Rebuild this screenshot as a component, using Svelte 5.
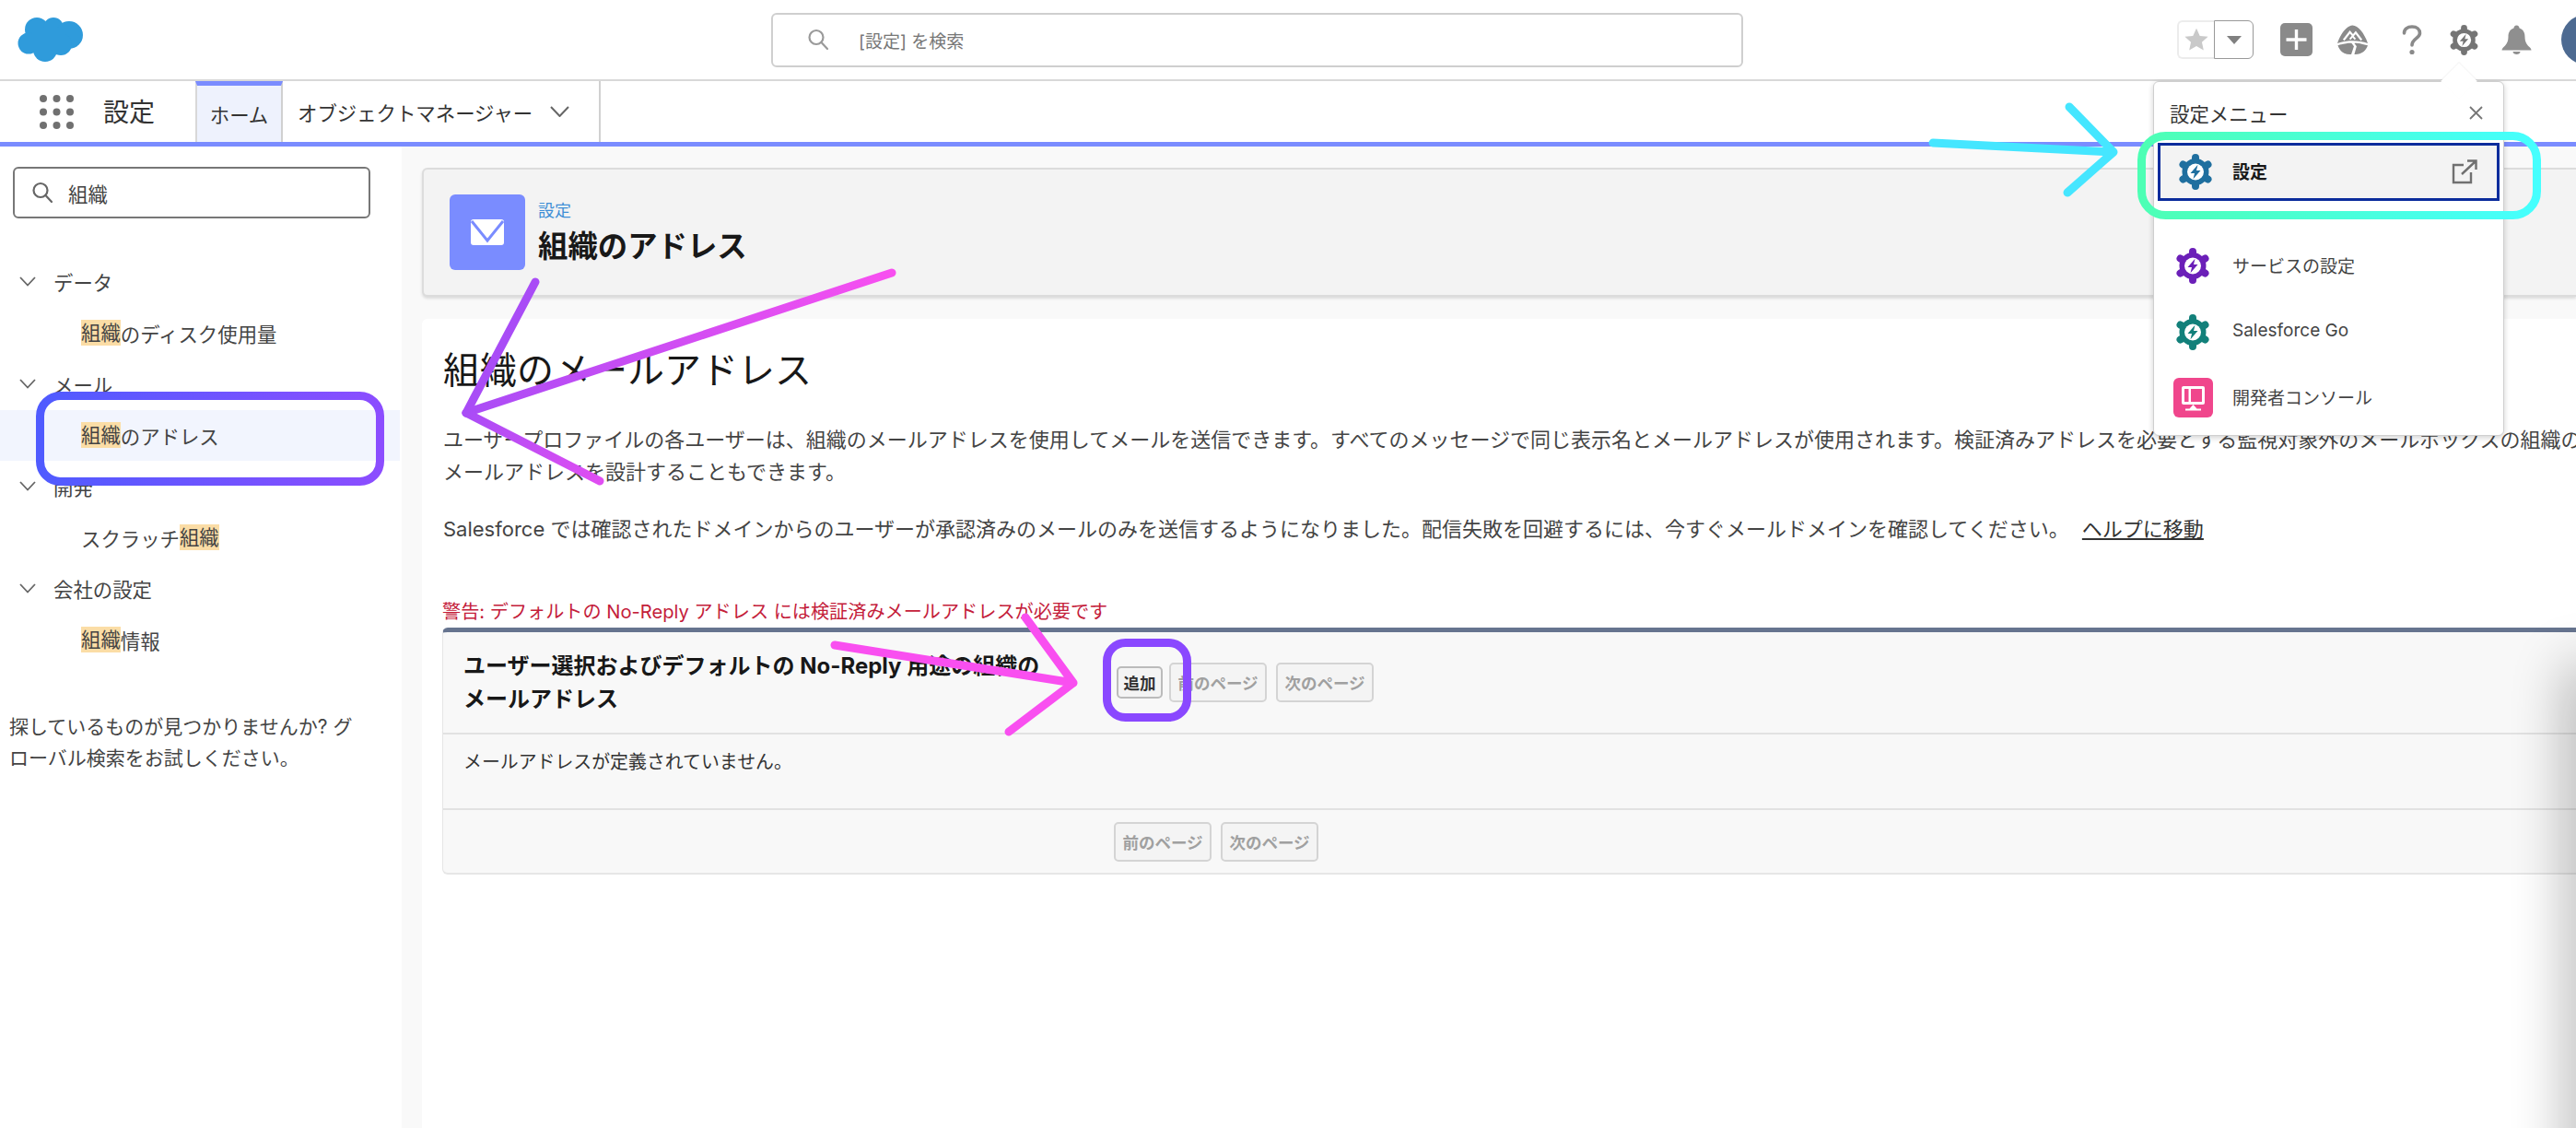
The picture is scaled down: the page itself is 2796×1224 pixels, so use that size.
<script lang="ts">
  interface Part { t: string; hl?: boolean; }
  interface Group { title: string; items: { parts: Part[]; active?: boolean }[]; }

  const groups: Group[] = [
    { title: 'データ', items: [{ parts: [{ t: '組織', hl: true }, { t: 'のディスク使用量' }] }] },
    { title: 'メール', items: [{ parts: [{ t: '組織', hl: true }, { t: 'のアドレス' }], active: true }] },
    { title: '開発', items: [{ parts: [{ t: 'スクラッチ' }, { t: '組織', hl: true }] }] },
    { title: '会社の設定', items: [{ parts: [{ t: '組織', hl: true }, { t: '情報' }] }] }
  ];

  const knobs = [[18, 4], [31.5, 11.5], [31.5, 27.5], [18, 35], [4.5, 27.5], [4.5, 11.5]];
</script>

{#snippet gear(color: string)}
  <svg class="gear" viewBox="0 0 36 39">
    <circle cx="18" cy="19.5" r="14.5" fill={color} />
    {#each knobs as k}
      <line x1="18" y1="19.5" x2={k[0]} y2={k[1]} stroke={color} stroke-width="8" stroke-linecap="round" />
    {/each}
    <circle cx="18" cy="19.5" r="9" fill="#fff" />
    <path d="M20.5 11.8 L12.5 21 H17 L15.5 27.2 L23.5 18 H19 Z" fill={color} />
  </svg>
{/snippet}

<div class="page">
  <header class="top">
    <div class="logo-cell">
      <svg class="logo" viewBox="0 0 72 50">
        <g fill="#2f9bdb">
          <circle cx="21" cy="14" r="13" />
          <circle cx="39" cy="12" r="11" />
          <circle cx="56" cy="20" r="15" />
          <circle cx="12" cy="29" r="11.5" />
          <circle cx="30" cy="36" r="13" />
          <circle cx="47" cy="30" r="12" />
          <rect x="16" y="12" width="36" height="24" />
        </g>
      </svg>
    </div>
    <div class="search">
      <svg class="mag" viewBox="0 0 24 24" fill="none" stroke="#9a9a9a" stroke-width="2.2">
        <circle cx="10" cy="9.5" r="7.5" />
        <path d="M15.5 15 L22 22" stroke-linecap="round" />
      </svg>
      <span>[設定] を検索</span>
    </div>
    <div class="actions">
      <div class="fav">
        <span class="fav-star">
          <svg viewBox="0 0 24 24" width="28" height="28"><path d="M12 1.5l3.2 7 7.6.8-5.7 5.1 1.6 7.5L12 18.1l-6.7 3.8 1.6-7.5L1.2 9.3l7.6-.8z" fill="#c9c9c9" /></svg>
        </span>
        <span class="fav-drop"><i class="tri"></i></span>
      </div>
      <svg class="plus" viewBox="0 0 35 36">
        <rect width="35" height="36" rx="5" fill="#8a8a8a" />
        <path d="M17.5 7v22M6.5 18h22" stroke="#fff" stroke-width="3.4" />
      </svg>
      <svg class="trail" viewBox="0 0 36 34">
        <path d="M18 0.5C24 0.5 31 9 35 20.5C25 17 11 17 1 20.5C5 9 12 0.5 18 0.5Z" fill="#8a8a8a" />
        <path d="M1.5 23C11 20 16 20 17 20.5L19.5 24L16.5 33C8 33.5 3.5 29 1.5 23ZM35 23C25 20 21 20 20 20.5L22.5 24L20 33C28 33.5 33 29 35 23Z" fill="#8a8a8a" />
        <path d="M8 17L15 8L18.5 12L21.5 8.5L28 17" fill="none" stroke="#fff" stroke-width="2.2" />
        <path d="M15 16L18 12.5L21 16" fill="none" stroke="#fff" stroke-width="2" />
      </svg>
      <svg class="help" viewBox="0 0 22 33" fill="none">
        <path d="M2.5 9C2.5 4.5 6 2 11 2C16.5 2 19.5 5 19.5 9C19.5 14.5 11 15 11 22" stroke="#8a8a8a" stroke-width="3.6" stroke-linecap="round" />
        <circle cx="11" cy="29.5" r="2.6" fill="#8a8a8a" />
      </svg>
      <span class="gear-top">{@render gear('#757575')}</span>
      <svg class="bell" viewBox="0 0 33 32">
        <path d="M16.5 0.5C18.5 0.5 19.5 2 19.5 3.5C24 5 25.5 8.5 25.5 13C25.5 19 28 22 31 24.5C32 25.5 32.5 26.5 32.5 27.5H0.5C0.5 26.5 1 25.5 2 24.5C5 22 7.5 19 7.5 13C7.5 8.5 9 5 13.5 3.5C13.5 2 14.5 0.5 16.5 0.5Z" fill="#8f8f8f" />
        <path d="M12.5 29H20.5C20.5 31 18.5 32 16.5 32C14.5 32 12.5 31 12.5 29Z" fill="#8f8f8f" />
      </svg>
      <span class="avatar"></span>
    </div>
  </header>

  <nav class="tabs">
    <div class="app">
      <svg class="dots" viewBox="0 0 37 37">
        {#each [4, 18.5, 33] as cy}
          {#each [4, 18.5, 33] as cx}
            <circle {cx} {cy} r="4" fill="#707070" />
          {/each}
        {/each}
      </svg>
      <span class="app-name">設定</span>
    </div>
    <div class="tab home">ホーム</div>
    <div class="tab obj">
      <span>オブジェクトマネージャー</span>
      <svg viewBox="0 0 21 12" width="21" height="12" fill="none"><path d="M1 1l9.5 10L20 1" stroke="#666" stroke-width="2" /></svg>
    </div>
  </nav>

  <div class="body">
    <aside class="side">
      <div class="find">
        <svg class="mag" viewBox="0 0 24 24" fill="none" stroke="#666" stroke-width="2.2">
          <circle cx="10" cy="9.5" r="7.5" />
          <path d="M15.5 15 L22 22" stroke-linecap="round" />
        </svg>
        <span>組織</span>
      </div>
      <ul class="tree">
        {#each groups as g}
          <li class="group">
            <svg viewBox="0 0 18 11" width="18" height="11" fill="none"><path d="M1 1l8 8.5L17 1" stroke="#666" stroke-width="1.8" /></svg>
            <span>{g.title}</span>
          </li>
          {#each g.items as item}
            <li class="leaf" class:active={item.active}>
              {#each item.parts as p}
                {#if p.hl}<mark>{p.t}</mark>{:else}{p.t}{/if}
              {/each}
            </li>
          {/each}
        {/each}
      </ul>
      <p class="hint">探しているものが見つかりませんか? グローバル検索をお試しください。</p>
    </aside>

    <main class="content">
      <section class="card">
        <div class="card-icon">
          <svg viewBox="0 0 36 28" width="36" height="28">
            <rect width="36" height="28" rx="3" fill="#fff" />
            <path d="M1 2l17 21L35 2" fill="none" stroke="#7a8cff" stroke-width="3" />
          </svg>
        </div>
        <div class="card-text">
          <div class="crumb">設定</div>
          <h2>組織のアドレス</h2>
        </div>
      </section>

      <section class="panel">
        <h1>組織のメールアドレス</h1>
        <p class="first">ユーザープロファイルの各ユーザーは、組織のメールアドレスを使用してメールを送信できます。すべてのメッセージで同じ表示名とメールアドレスが使用されます。検証済みアドレスを必要とする監視対象外のメールボックスの組織の<br />メールアドレスを設計することもできます。</p>
        <p class="second">Salesforce では確認されたドメインからのユーザーが承認済みのメールのみを送信するようになりました。配信失敗を回避するには、今すぐメールドメインを確認してください。 <a href="#help">ヘルプに移動</a></p>
        <div class="warn">警告: デフォルトの No-Reply アドレス には検証済みメールアドレスが必要です</div>

        <div class="table">
          <div class="t-head">
            <h3>ユーザー選択およびデフォルトの No-Reply 用途の組織の<br />メールアドレス</h3>
            <button class="add">追加</button>
            <button class="off">前のページ</button>
            <button class="off">次のページ</button>
          </div>
          <div class="t-body">メールアドレスが定義されていません。</div>
          <div class="t-foot">
            <button class="off">前のページ</button>
            <button class="off">次のページ</button>
          </div>
        </div>
      </section>
    </main>
  </div>

  <div class="edge-shadow"></div>

  <div class="menu">
    <i class="notch"></i>
    <div class="menu-head">
      <span>設定メニュー</span>
      <svg viewBox="0 0 15 15" width="15" height="15"><path d="M1 1l13 13M14 1L1 14" stroke="#777" stroke-width="1.8" /></svg>
    </div>
    <div class="menu-row selected">
      <span class="menu-icon">{@render gear('#1f6f9f')}</span>
      <b>設定</b>
      <svg class="ext" viewBox="0 0 28 27" fill="none" stroke="#707070" stroke-width="2.4">
        <path d="M13 6H2v19h19V14" />
        <path d="M11 16L26 2M17 1.5h9.5V11" />
      </svg>
    </div>
    <div class="menu-list">
      <div class="menu-row"><span class="menu-icon">{@render gear('#6b1fb8')}</span><span>サービスの設定</span></div>
      <div class="menu-row"><span class="menu-icon">{@render gear('#12807a')}</span><span>Salesforce Go</span></div>
      <div class="menu-row">
        <span class="menu-icon">
          <svg viewBox="0 0 43 43" width="43" height="43">
            <rect width="43" height="43" rx="6" fill="#f0468c" />
            <rect x="9" y="9" width="25" height="20" rx="2" fill="#fff" />
            <rect x="12" y="12" width="4.5" height="14" fill="#f0468c" />
            <rect x="19" y="12" width="12" height="14" fill="#f0468c" />
            <path d="M21.5 29l4 4.5h-8zM13 33.5h17v2H13z" fill="#fff" />
          </svg>
        </span>
        <span>開発者コンソール</span>
      </div>
    </div>
  </div>

  <!-- annotations drawn over the screenshot -->
  <svg class="marks" viewBox="0 0 2796 1224" fill="none" stroke-linecap="round" stroke-linejoin="round">
    <defs>
      <linearGradient id="mint" gradientUnits="userSpaceOnUse" x1="2320" y1="0" x2="2758" y2="0">
        <stop offset="0" stop-color="#4dffb4" />
        <stop offset="1" stop-color="#45ffff" />
      </linearGradient>
      <linearGradient id="violet" gradientUnits="userSpaceOnUse" x1="39" y1="0" x2="417" y2="0">
        <stop offset="0" stop-color="#4f5bff" />
        <stop offset="1" stop-color="#8c4dff" />
      </linearGradient>
      <linearGradient id="magenta" gradientUnits="userSpaceOnUse" x1="968" y1="296" x2="506" y2="448">
        <stop offset="0" stop-color="#f84ff0" />
        <stop offset="1" stop-color="#a94cf6" />
      </linearGradient>
      <linearGradient id="magenta2" gradientUnits="userSpaceOnUse" x1="506" y1="448" x2="651" y2="522">
        <stop offset="0" stop-color="#a94cf6" />
        <stop offset="1" stop-color="#e04ef2" />
      </linearGradient>
    </defs>
    <path d="M2098 155 L2294 165 M2246 116 L2294 165 L2244 209" stroke="#45e6ff" stroke-width="9" />
    <rect x="2324.5" y="147.5" width="429" height="86" rx="26" stroke="url(#mint)" stroke-width="9" />
    <rect x="43.5" y="429.5" width="369" height="93" rx="22" stroke="url(#violet)" stroke-width="9" />
    <path d="M581 306 L506 448" stroke="#a94cf6" stroke-width="9" />
    <path d="M968 296 L506 448" stroke="url(#magenta)" stroke-width="9" />
    <path d="M506 448 L651 522" stroke="url(#magenta2)" stroke-width="9" />
    <path d="M906 700 L1165 741 M1113 670 L1165 741 L1095 794" stroke="#f94ff0" stroke-width="9" />
    <rect x="1201.5" y="697.5" width="87" height="81" rx="20" stroke="#8a48ff" stroke-width="9" />
  </svg>
</div>

<style>
  :global(body) {
    margin: 0;
  }
  .page {
    position: relative;
    width: 2796px;
    height: 1224px;
    overflow: hidden;
    background: #fff;
    color: #444;
    font-family: Inter, "Noto Sans CJK JP", sans-serif;
    font-size: 21.4px;
  }
  svg {
    display: block;
  }
  .top {
    display: grid;
    grid-template-columns: 837px 1055px 1fr;
    align-items: center;
    height: 88px;
    box-sizing: border-box;
    border-bottom: 2px solid #d8d8d8;
  }
  .logo-cell {
    padding-left: 19px;
  }
  .logo {
    width: 72px;
    height: 50px;
  }
  .search {
    display: flex;
    align-items: center;
    gap: 32px;
    height: 59px;
    padding-left: 37px;
    box-sizing: border-box;
    border: 2px solid #cfcfcf;
    border-radius: 6px;
    color: #777;
    font-size: 19px;
  }
  .mag {
    width: 24px;
    height: 24px;
    flex-shrink: 0;
  }
  .actions {
    display: flex;
    align-items: center;
    padding-left: 471px;
  }
  .fav {
    display: flex;
    width: 83px;
    height: 42px;
    flex-shrink: 0;
  }
  .fav-star {
    display: flex;
    align-items: center;
    justify-content: center;
    width: 40px;
    border: 2px solid #ececec;
    border-right: 0;
    border-radius: 6px 0 0 6px;
    box-sizing: border-box;
  }
  .fav-drop {
    display: flex;
    align-items: center;
    justify-content: center;
    flex: 1;
    border: 1.5px solid #999;
    border-radius: 0 6px 6px 0;
  }
  .tri {
    width: 0;
    height: 0;
    border-left: 8px solid transparent;
    border-right: 8px solid transparent;
    border-top: 9px solid #808080;
  }
  .plus {
    width: 35px;
    height: 36px;
    margin-left: 29px;
    flex-shrink: 0;
  }
  .trail {
    width: 35px;
    height: 33px;
    margin-left: 26px;
    flex-shrink: 0;
  }
  .help {
    width: 22px;
    height: 33px;
    margin-left: 36px;
    flex-shrink: 0;
  }
  .gear-top {
    width: 31px;
    height: 33px;
    margin-left: 30px;
    flex-shrink: 0;
  }
  .gear-top :global(.gear) {
    width: 31px;
    height: 33px;
  }
  .bell {
    width: 33px;
    height: 32px;
    margin-left: 25px;
    flex-shrink: 0;
  }
  .avatar {
    width: 54px;
    height: 54px;
    margin-left: 32px;
    flex-shrink: 0;
    border-radius: 50%;
    background: #4d6a91;
  }
  .tabs {
    display: flex;
    height: 71px;
    box-sizing: border-box;
    border-bottom: 5px solid #7a8cff;
  }
  .app {
    display: flex;
    align-items: center;
    width: 212px;
    padding-left: 43px;
    box-sizing: border-box;
    gap: 32px;
  }
  .dots {
    width: 37px;
    height: 37px;
  }
  .app-name {
    font-size: 28px;
    color: #333;
    margin-top: -2px;
  }
  .tab {
    display: flex;
    align-items: center;
    box-sizing: border-box;
    border-right: 2px solid #d0d0d0;
    color: #333;
  }
  .home {
    width: 95px;
    justify-content: center;
    background: #eef2fd;
    border-top: 5px solid #7a8cff;
    border-left: 2px solid #d8d8d8;
  }
  .obj {
    width: 345px;
    padding-left: 16px;
    gap: 19px;
  }
  .body {
    display: grid;
    grid-template-columns: 436px 1fr;
    height: 1065px;
  }
  .side {
    padding-top: 22px;
    background: #fff;
  }
  .find {
    display: flex;
    align-items: center;
    gap: 16px;
    width: 388px;
    height: 56px;
    margin-left: 14px;
    padding-left: 18px;
    box-sizing: border-box;
    border: 2px solid #777;
    border-radius: 6px;
  }
  .tree {
    list-style: none;
    width: 434px;
    margin: 41px 0 0;
    padding: 0;
  }
  .group,
  .leaf {
    display: flex;
    align-items: center;
    height: 55.5px;
  }
  .group {
    gap: 19px;
    padding-left: 21px;
  }
  .leaf {
    padding-left: 88px;
  }
  .leaf.active {
    background: #f2f5fe;
  }
  mark {
    background: #fbdda6;
    color: inherit;
    line-height: 28px;
  }
  .hint {
    width: 384px;
    margin: 50px 0 0 10px;
    line-height: 34px;
    font-size: 21px;
  }
  .content {
    padding: 23px 0 0 22px;
    background: #f9f9f9;
    min-width: 0;
  }
  .card {
    display: flex;
    align-items: center;
    gap: 14px;
    height: 140px;
    padding-left: 28px;
    box-sizing: border-box;
    background: #f3f3f3;
    border: 2px solid #dcdcdc;
    border-right: 0;
    border-radius: 6px 0 0 6px;
    box-shadow: 0 2px 3px rgba(0, 0, 0, 0.12);
  }
  .card-icon {
    display: flex;
    align-items: center;
    justify-content: center;
    width: 82px;
    height: 82px;
    background: #7a8cff;
    border-radius: 6px;
  }
  .card-text {
    margin-top: 3px;
  }
  .crumb {
    color: #3f8fd6;
    font-size: 18px;
    line-height: 24px;
  }
  h2 {
    margin: 5px 0 0;
    color: #181818;
    font-size: 32.4px;
    font-weight: 700;
    line-height: 44px;
  }
  .panel {
    height: 878px;
    margin-top: 24px;
    padding: 34px 0 0 23px;
    box-sizing: border-box;
    background: #fff;
    border-radius: 6px 0 0 0;
    overflow: hidden;
    white-space: nowrap;
  }
  h1 {
    margin: 0;
    color: #181818;
    font-size: 40px;
    font-weight: 400;
    line-height: 44px;
  }
  .first,
  .second {
    font-size: 22px;
    line-height: 35px;
    margin: 0;
  }
  .first {
    margin-top: 36px;
  }
  .second {
    margin-top: 27px;
  }
  .second a {
    margin-left: 8px;
    color: #333;
    text-decoration: underline;
  }
  .warn {
    margin-top: 58px;
    margin-left: -1px;
    color: #c4203a;
    font-size: 20.15px;
    line-height: 28px;
  }
  .table {
    margin: 3px 0 0 -1px;
    background: #f8f8f8;
    border-top: 5px solid #66748f;
    border-bottom: 2px solid #e6e6e6;
    border-left: 1px solid #e6e6e6;
    border-radius: 6px 0 0 6px;
  }
  .t-head {
    display: flex;
    align-items: center;
    height: 111px;
    box-sizing: border-box;
    padding-left: 22px;
    border-bottom: 2px solid #e2e2e2;
  }
  h3 {
    width: 709px;
    margin: 0;
    color: #181818;
    font-size: 24px;
    font-weight: 700;
    line-height: 36px;
  }
  button {
    height: 43px;
    padding: 0;
    background: #f4f4f4;
    border: 2px solid #d4d4d4;
    border-radius: 5px;
    font-family: inherit;
    font-size: 17.5px;
    font-weight: 700;
  }
  .add {
    width: 50px;
    height: 35px;
    margin-right: 7px;
    border-color: #bbb;
    color: #333;
  }
  .off {
    width: 106px;
    color: #a0a0a0;
  }
  .off + .off {
    margin-left: 10px;
  }
  .t-body {
    height: 82px;
    box-sizing: border-box;
    padding: 16px 0 0 22px;
    font-size: 19.9px;
    line-height: 28px;
    color: #333;
    border-bottom: 2px solid #e2e2e2;
  }
  .t-foot {
    display: flex;
    align-items: center;
    height: 68px;
    padding-left: 728px;
  }
  .edge-shadow {
    position: absolute;
    right: -30px;
    top: 730px;
    width: 30px;
    height: 600px;
    box-shadow: 0 0 60px 8px rgba(0, 0, 0, 0.32);
  }
  .menu {
    position: absolute;
    left: 2337px;
    top: 88px;
    width: 381px;
    height: 385px;
    box-sizing: border-box;
    background: #fff;
    border: 1px solid #cfcfcf;
    border-radius: 6px;
    box-shadow: 0 2px 6px rgba(0, 0, 0, 0.18);
  }
  .notch {
    position: absolute;
    left: 317px;
    top: -15px;
    width: 28px;
    height: 28px;
    background: #fff;
    transform: rotate(45deg);
    box-shadow: -1px -1px 1px rgba(0, 0, 0, 0.04);
  }
  .menu-head {
    position: relative;
    display: flex;
    align-items: center;
    justify-content: space-between;
    height: 66px;
    box-sizing: border-box;
    padding: 0 22px 0 17px;
    color: #333;
  }
  .menu-row {
    display: flex;
    align-items: center;
    gap: 21px;
    height: 71.5px;
    padding-left: 20px;
    font-size: 19px;
    color: #444;
  }
  .menu-row > span:last-child,
  .menu-row b {
    margin-top: -3px;
  }
  .menu-row.selected {
    height: 63px;
    margin: 0 4px;
    padding-left: 16px;
    box-sizing: border-box;
    background: #f3f3f3;
    border: 3px solid #0b2c9c;
    color: #181818;
    gap: 18px;
  }
  .menu-row b {
    flex: 1;
  }
  .ext {
    width: 28px;
    height: 27px;
    margin-right: 21px;
  }
  .menu-list {
    margin-top: 35px;
  }
  .menu-icon {
    display: flex;
    justify-content: center;
    width: 44px;
  }
  .gear {
    width: 36px;
    height: 39px;
  }
  .marks {
    position: absolute;
    left: 0;
    top: 0;
    width: 2796px;
    height: 1224px;
    pointer-events: none;
  }
</style>
